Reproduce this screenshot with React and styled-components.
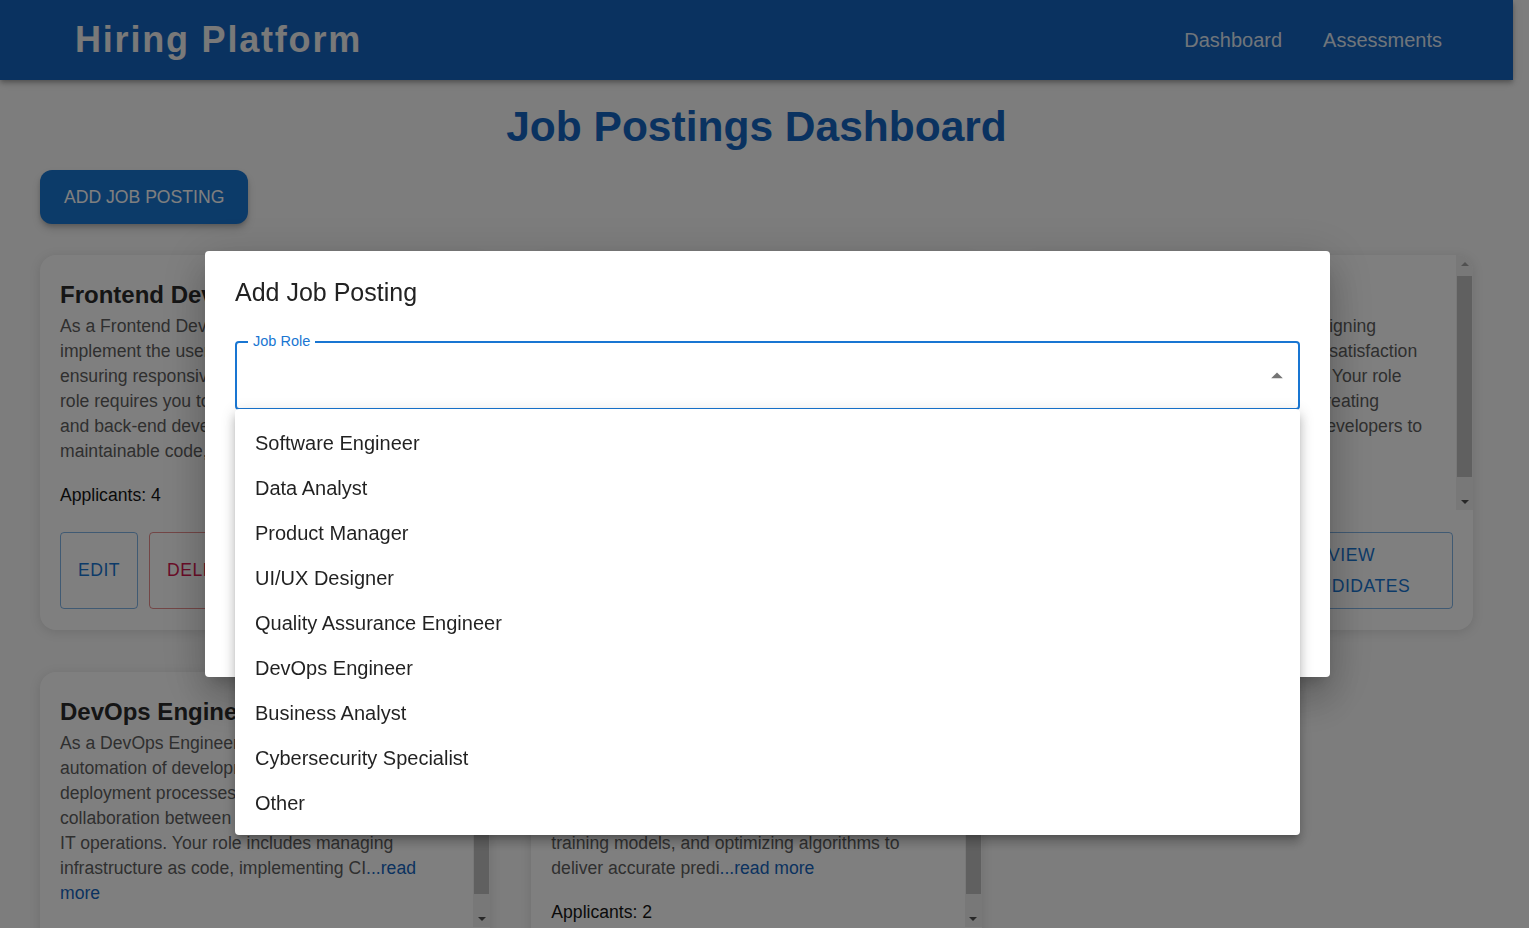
import React from 'react'
import styled, { createGlobalStyle } from 'styled-components'

const GlobalStyle = createGlobalStyle`
  html, body {
    margin: 0;
    height: 100%;
  }
  body {
    padding-right: 16px;
    overflow: hidden;
    background: #fafafa;
    font-family: "Liberation Sans", Arial, Helvetica, sans-serif;
  }
  * {
    box-sizing: border-box;
  }
`

const jobs = [
  {
    title: 'Frontend Developer',
    text: 'As a Frontend Developer, you will design and implement the user interface of our web apps, ensuring responsive and accessible layouts. This role requires you to work closely with designers and back-end developers to deliver clean, maintainable code, following best',
    applicants: 4,
  },
  {
    title: 'Backend Developer',
    text: 'As a Backend Developer, you will build and maintain the server-side logic of our platform, designing APIs and databases that scale. You will collaborate with frontend developers and product owners to ship reliable features and keep',
    applicants: 3,
  },
  {
    title: 'UI/UX Designer',
    text: 'As a UI/UX Designer, you will be designing intuitive interfaces that improve user satisfaction across all web and mobile platforms. Your role involves user studies, wireframing, creating prototypes and working tightly with developers to bring designs to life',
    applicants: 5,
  },
  {
    title: 'DevOps Engineer',
    text: 'As a DevOps Engineer, you will oversee the automation of development, testing, and deployment processes, ensuring seamless collaboration between software development and IT operations. Your role includes managing infrastructure as code, implementing CI',
    applicants: 3,
  },
  {
    title: 'Data Scientist',
    text: 'As a Data Scientist, you will analyze complex datasets to uncover insights that drive business decisions. You will be responsible for building predictive models, cleaning data, validating training models, and optimizing algorithms to deliver accurate predi',
    applicants: 2,
  },
]

const roles = [
  'Software Engineer',
  'Data Analyst',
  'Product Manager',
  'UI/UX Designer',
  'Quality Assurance Engineer',
  'DevOps Engineer',
  'Business Analyst',
  'Cybersecurity Specialist',
  'Other',
]

const App = () => {
  return (
    <>
      <GlobalStyle />
      <Header>
        <Brand>Hiring Platform</Brand>
        <Nav>
          <NavLink>Dashboard</NavLink>
          <NavLink>Assessments</NavLink>
        </Nav>
      </Header>

      <Main>
        <PageTitle>Job Postings Dashboard</PageTitle>
        <AddButton>ADD JOB POSTING</AddButton>
        <CardGrid>
          {jobs.map((job) => (
            <Card key={job.title}>
              <CardBody>
                <BodyContent>
                  <CardTitle>{job.title}</CardTitle>
                  <Description>
                    {job.text}
                    <ReadMore>...read more</ReadMore>
                  </Description>
                  <Applicants>Applicants: {job.applicants}</Applicants>
                </BodyContent>
                <ScrollBar>
                  <ScrollArrow>
                    <ArrowUp />
                  </ScrollArrow>
                  <ScrollThumb />
                  <ScrollArrow>
                    <ArrowDown />
                  </ScrollArrow>
                </ScrollBar>
              </CardBody>
              <Actions>
                <OutlineButton>Edit</OutlineButton>
                <OutlineButton $danger>Delete</OutlineButton>
                <OutlineButton>View Candidates</OutlineButton>
              </Actions>
            </Card>
          ))}
        </CardGrid>
      </Main>

      <Backdrop />
      <DialogLayer>
        <Dialog>
          <DialogTitle>Add Job Posting</DialogTitle>
          <DialogContent>
            <SelectField>
              <FieldLabel>Job Role</FieldLabel>
              <ArrowIcon viewBox="0 0 24 24">
                <path d="M7 14l5-5 5 5z" />
              </ArrowIcon>
              <Menu>
                {roles.map((role) => (
                  <MenuItem key={role}>{role}</MenuItem>
                ))}
              </Menu>
            </SelectField>
          </DialogContent>
        </Dialog>
      </DialogLayer>
    </>
  )
}

const Header = styled.header`
  height: 80px;
  background: #1565c0;
  display: flex;
  align-items: center;
  justify-content: space-between;
  padding: 0 71px 0 75px;
  box-shadow: 0 2px 4px -1px rgba(0, 0, 0, 0.2), 0 4px 5px 0 rgba(0, 0, 0, 0.14),
    0 1px 10px 0 rgba(0, 0, 0, 0.12);
  position: relative;
  z-index: 1;
`

const Brand = styled.div`
  font-size: 36px;
  font-weight: 700;
  letter-spacing: 1.8px;
  color: #f2f2f2;
`

const Nav = styled.nav`
  display: flex;
  gap: 41px;
`

const NavLink = styled.a`
  font-size: 20px;
  color: rgba(255, 255, 255, 0.88);
  text-decoration: none;
`

const Main = styled.main`
  padding: 0 40px;
`

const PageTitle = styled.h1`
  margin: 22px 0 18px;
  text-align: center;
  font-size: 42.5px;
  line-height: 50px;
  font-weight: 700;
  color: #1565c0;
`

const AddButton = styled.button`
  height: 54px;
  padding: 0 24px;
  border: none;
  border-radius: 12px;
  background: #1976d2;
  color: #fff;
  font-family: inherit;
  font-size: 17.6px;
  box-shadow: 0 3px 5px -1px rgba(0, 0, 0, 0.2), 0 5px 8px 0 rgba(0, 0, 0, 0.14);
`

const CardGrid = styled.div`
  margin-top: 31px;
  display: grid;
  grid-template-columns: repeat(3, 1fr);
  gap: 42px 41px;
  align-items: start;
`

const Card = styled.div`
  background: #fff;
  border-radius: 16px;
  box-shadow: 0 2px 12px rgba(0, 0, 0, 0.12);
  overflow: hidden;
`

const CardBody = styled.div`
  display: flex;
  height: 255px;
`

const BodyContent = styled.div`
  flex: 1;
  min-width: 0;
  padding: 20px;
  overflow: hidden;
`

const ScrollBar = styled.div`
  width: 17px;
  flex-shrink: 0;
  display: flex;
  flex-direction: column;
  background: #f1f1f1;
`

const ScrollArrow = styled.div`
  height: 17px;
  display: flex;
  align-items: center;
  justify-content: center;
`

const ArrowUp = styled.span`
  border-left: 4px solid transparent;
  border-right: 4px solid transparent;
  border-bottom: 4px solid #a3a3a3;
`

const ArrowDown = styled.span`
  border-left: 4px solid transparent;
  border-right: 4px solid transparent;
  border-top: 4px solid #505050;
`

const ScrollThumb = styled.div`
  flex: 1;
  margin: 4px 1px 16px;
  background: #c1c1c1;
`

const CardTitle = styled.h2`
  margin: 6px 0 0;
  font-size: 24px;
  line-height: 28px;
  font-weight: 700;
  color: #2b2b2b;
`

const Description = styled.p`
  margin: 5px 0 0;
  font-size: 17.6px;
  line-height: 25px;
  color: #5f5f5f;
`

const ReadMore = styled.span`
  color: #1565c0;
  cursor: pointer;
`

const Applicants = styled.p`
  margin: 19px 0 0;
  font-size: 17.6px;
  line-height: 25px;
  color: #151515;
`

const Actions = styled.div`
  display: flex;
  gap: 11px;
  padding: 22px 20px 21px;
`

const OutlineButton = styled.button`
  padding: 6.5px 17px;
  border-radius: 4px;
  background: transparent;
  border: 1px solid ${(p) => (p.$danger ? 'rgba(211, 47, 47, 0.55)' : 'rgba(25, 118, 210, 0.55)')};
  color: ${(p) => (p.$danger ? '#d6184f' : '#1976d2')};
  font-family: inherit;
  font-size: 17.6px;
  letter-spacing: 0.5px;
  line-height: 31px;
  text-transform: uppercase;
`

const Backdrop = styled.div`
  position: fixed;
  inset: 0;
  background: rgba(0, 0, 0, 0.5);
  z-index: 10;
`

const DialogLayer = styled.div`
  position: fixed;
  inset: 0;
  z-index: 20;
  display: flex;
  align-items: center;
  justify-content: center;
`

const Dialog = styled.div`
  width: 1125px;
  height: 426px;
  margin-left: 6px;
  background: #fff;
  border-radius: 4px;
  box-shadow: 0 11px 15px -7px rgba(0, 0, 0, 0.2), 0 24px 38px 3px rgba(0, 0, 0, 0.14),
    0 9px 46px 8px rgba(0, 0, 0, 0.12);
`

const DialogTitle = styled.h2`
  margin: 0;
  padding: 25px 30px 0;
  font-size: 25px;
  line-height: 32px;
  font-weight: 400;
  color: #222;
`

const DialogContent = styled.div`
  padding: 33px 30px 0;
`

const SelectField = styled.div`
  position: relative;
  height: 69px;
  border: 2px solid #1976d2;
  border-radius: 4px;
`

const FieldLabel = styled.span`
  position: absolute;
  top: -10px;
  left: 11px;
  padding: 0 5px;
  background: #fff;
  font-size: 14.5px;
  line-height: 17px;
  color: #1976d2;
`

const ArrowIcon = styled.svg`
  position: absolute;
  right: 7px;
  top: 50%;
  width: 28px;
  height: 28px;
  transform: translateY(-50%);
  fill: #757575;
`

const Menu = styled.ul`
  position: absolute;
  top: calc(100% + 1px);
  left: -2px;
  right: -2px;
  margin: 0;
  padding: 12px 0 9px;
  list-style: none;
  background: #fff;
  border-radius: 4px;
  box-shadow: 0 5px 5px -3px rgba(0, 0, 0, 0.2), 0 8px 10px 1px rgba(0, 0, 0, 0.14),
    0 3px 14px 2px rgba(0, 0, 0, 0.12);
`

const MenuItem = styled.li`
  height: 45px;
  display: flex;
  align-items: center;
  padding: 0 20px;
  font-size: 20px;
  color: rgba(0, 0, 0, 0.87);
`

export default App
